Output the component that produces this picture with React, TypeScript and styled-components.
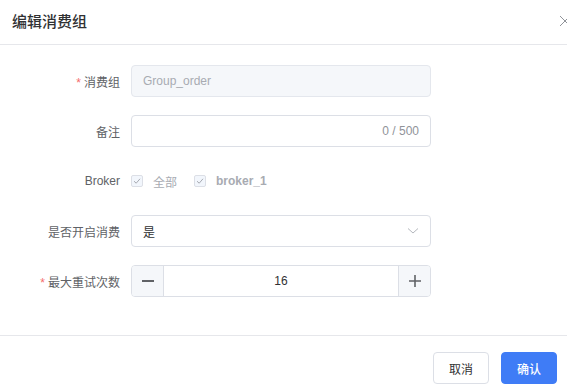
import React from 'react';
import styled, { createGlobalStyle } from 'styled-components';

const GlobalStyle = createGlobalStyle`
	html, body {
		margin: 0;
		padding: 0;
		background: #ffffff;
		overflow: hidden;
	}
	* {
		box-sizing: border-box;
	}
	body {
		font-family: "Liberation Sans", "Noto Sans CJK SC", sans-serif;
	}
`;

const Dialog = styled.div`
	width: 567px;
	height: 392px;
	background: #fff;
	overflow: hidden;
	display: flex;
	flex-direction: column;
`;

const Header = styled.div`
	height: 45px;
	display: flex;
	align-items: center;
	justify-content: space-between;
	padding: 0 0 3px 12px;
	border-bottom: 1px solid #e6e7eb;
`;

const Title = styled.div`
	font-size: 15px;
	font-weight: 500;
	color: #303133;
`;

const Close = styled.div`
	width: 12px;
	height: 12px;
	margin-right: -4px;
	display: flex;
`;

const Body = styled.div`
	padding: 20px 0 0 0;
	display: flex;
	flex-direction: column;
	gap: 18px;
	height: 290px;
`;

const Row = styled.div`
	display: flex;
	align-items: center;
	height: 32px;
`;

const Label = styled.div`
	width: 131px;
	padding-right: 11px;
	text-align: right;
	font-size: 12px;
	color: #606266;
`;

const Star = styled.span`
	color: #f56c6c;
	margin-right: 3px;
`;

const Field = styled.div<{ $disabled?: boolean }>`
	width: 300px;
	height: 32px;
	border: 1px solid ${p => (p.$disabled ? '#e4e7ed' : '#dcdfe6')};
	background: ${p => (p.$disabled ? '#f5f7fa' : '#fff')};
	border-radius: 4px;
	display: flex;
	align-items: center;
	padding: 0 11px;
	font-size: 12px;
	color: ${p => (p.$disabled ? '#a8abb2' : '#303133')};
	justify-content: space-between;
`;

const Count = styled.span`
	margin-left: auto;
	color: #909399;
	font-size: 12px;
`;

const Checks = styled.div`
	display: flex;
	align-items: center;
	gap: 17px;
`;

const CheckItem = styled.div<{ $bold?: boolean }>`
	display: flex;
	align-items: center;
	gap: 10px;
	font-size: 12px;
	color: #a8abb2;
	font-weight: ${p => (p.$bold ? 700 : 400)};
`;

const Box = styled.span`
	width: 12px;
	height: 12px;
	border: 1px solid #dcdfe6;
	background: #f2f6fc;
	border-radius: 2px;
	display: flex;
	align-items: center;
	justify-content: center;
`;

const NumberBox = styled.div`
	width: 300px;
	height: 32px;
	border: 1px solid #dcdfe6;
	border-radius: 4px;
	display: flex;
	overflow: hidden;
`;

const Step = styled.div<{ $side: 'left' | 'right' }>`
	width: 32px;
	background: #f5f7fa;
	display: flex;
	align-items: center;
	justify-content: center;
	${p => (p.$side === 'left' ? 'border-right: 1px solid #dcdfe6;' : 'border-left: 1px solid #dcdfe6;')}
`;

const NumValue = styled.div`
	flex: 1;
	display: flex;
	align-items: center;
	justify-content: center;
	font-size: 12px;
	color: #303133;
`;

const Footer = styled.div`
	border-top: 1px solid #e6e7eb;
	display: flex;
	justify-content: flex-end;
	gap: 12px;
	padding: 16px 10px 0 0;
`;

const Button = styled.button<{ $primary?: boolean }>`
	width: 56px;
	height: 32px;
	border-radius: 4px;
	font-family: inherit;
	font-size: 12px;
	border: 1px solid ${p => (p.$primary ? '#3f7cf6' : '#dcdfe6')};
	background: ${p => (p.$primary ? '#3f7cf6' : '#fff')};
	color: ${p => (p.$primary ? '#fff' : '#303133')};
	font-weight: ${p => (p.$primary ? 500 : 400)};
	padding: 0;
`;

const Check = () => (
	<svg width="8" height="8" viewBox="0 0 8 8">
		<path d="M1 4.2 L3.2 6.2 L7 1.8" fill="none" stroke="#a8abb2" strokeWidth="1" />
	</svg>
);

const App = () => {
	return (
		<Dialog>
			<GlobalStyle />
			<Header>
				<Title>编辑消费组</Title>
				<Close>
					<svg width="12" height="12" viewBox="0 0 12 12">
						<path d="M1 1 L11 11 M11 1 L1 11" stroke="#909399" strokeWidth="1" />
					</svg>
				</Close>
			</Header>
			<Body>
				<Row>
					<Label><Star>*</Star>消费组</Label>
					<Field $disabled>Group_order</Field>
				</Row>
				<Row>
					<Label>备注</Label>
					<Field><Count>0 / 500</Count></Field>
				</Row>
				<Row>
					<Label>Broker</Label>
					<Checks>
						<CheckItem><Box><Check /></Box>全部</CheckItem>
						<CheckItem $bold><Box><Check /></Box>broker_1</CheckItem>
					</Checks>
				</Row>
				<Row>
					<Label>是否开启消费</Label>
					<Field>
						是
						<svg width="12" height="8" viewBox="0 0 12 8">
							<path d="M1 1.5 L6 6 L11 1.5" fill="none" stroke="#b4b7bd" strokeWidth="1" />
						</svg>
					</Field>
				</Row>
				<Row>
					<Label><Star>*</Star>最大重试次数</Label>
					<NumberBox>
						<Step $side="left">
							<svg width="12" height="12" viewBox="0 0 12 12">
								<path d="M0 6 H12" stroke="#606266" strokeWidth="2" />
							</svg>
						</Step>
						<NumValue>16</NumValue>
						<Step $side="right">
							<svg width="12" height="12" viewBox="0 0 12 12">
								<path d="M0 6 H12 M6 0 V12" stroke="#606266" strokeWidth="1.6" />
							</svg>
						</Step>
					</NumberBox>
				</Row>
			</Body>
			<Footer>
				<Button>取消</Button>
				<Button $primary>确认</Button>
			</Footer>
		</Dialog>
	);
};

export default App;
